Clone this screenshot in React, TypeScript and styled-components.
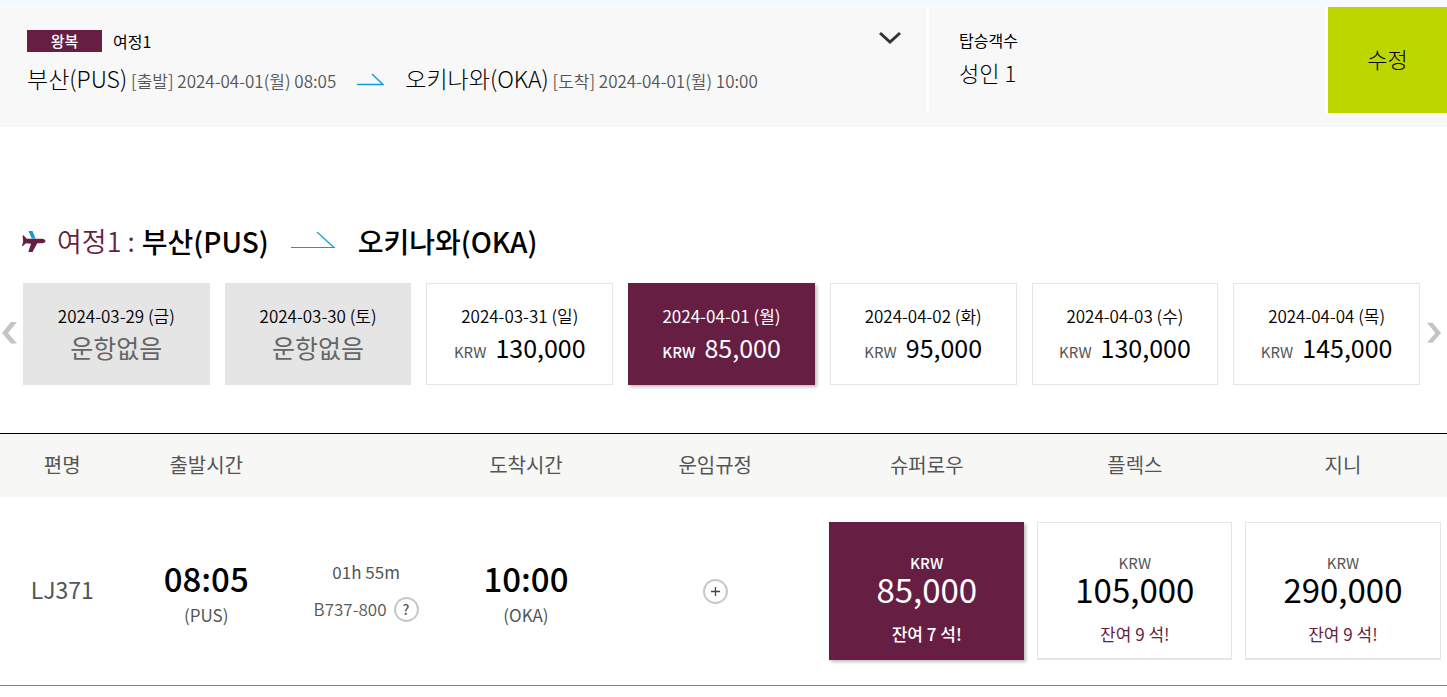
import React from "react";
import styled, { createGlobalStyle, css } from "styled-components";

const plum = "#661e43";
const sky = "#0d9ddb";

const GlobalStyle = createGlobalStyle`
  *, *::before, *::after { box-sizing: border-box; }
  body {
    margin: 0;
    background: #fff;
    color: #000;
    font-family: "Noto Sans CJK KR", "Noto Sans", sans-serif;
    font-size: 17px;
    line-height: 24px;
  }
  button { font: inherit; color: inherit; cursor: pointer; border: 0; padding: 0; background: none; }
  h2, p { margin: 0; }
`;

const Summary = styled.header`
  display: grid;
  grid-template-columns: 64% minmax(0, 1fr) 119px;
  padding-bottom: 14px;
  border-top: 7px solid #f5fafe;
  background: #f8f8f8;
`;

const Trip = styled.section`
  display: flex;
  align-items: flex-start;
  justify-content: space-between;
  min-height: 106px;
  padding: 22px 25px 0 27px;
`;

const TripHead = styled.div`
  display: flex;
  align-items: center;
  gap: 11px;
  height: 24px;
  font-size: 16px;
`;

const Badge = styled.span`
  width: 75px;
  background: ${plum};
  color: #fff;
  font-size: 15px;
  font-weight: 500;
  line-height: 22px;
  text-align: center;
`;

const Legs = styled.div`
  display: flex;
  align-items: center;
  flex-wrap: wrap;
  gap: 21px;
  margin-top: 9px;
  line-height: 32px;
`;

const Airport = styled.span`
  font-size: 23px;
  font-weight: 300;
`;

const Moment = styled.span`
  color: #555;
  font-weight: 350;
`;

const ToggleButton = styled.button`
  display: flex;
  margin-top: 2px;
`;

const Passengers = styled.section`
  padding: 21px 30px 0;
  border: solid #fff;
  border-width: 0 3px;
  font-size: 16px;
`;

const Count = styled.p`
  margin-top: 4px;
  font-size: 22px;
  font-weight: 300;
  line-height: 32px;
`;

const EditButton = styled.button`
  padding-bottom: 4px;
  background: #bdd600;
  font-size: 22px;
  font-weight: 300;
`;

const RouteTitle = styled.h2`
  display: flex;
  align-items: center;
  margin: 94px 22px 0;
  font-size: 28px;
  font-weight: 500;
  line-height: 40px;
`;

const RouteLabel = styled.span`
  margin: 0 7px 0 11px;
  color: ${plum};
  font-size: 27px;
  font-weight: 350;
`;

const RouteArrow = styled.svg`
  margin: 0 22px;
`;

const DateStrip = styled.nav`
  display: grid;
  grid-template-columns: 23px minmax(0, 1fr) 27px;
  margin-top: 22px;
`;

const PageButton = styled.button<{ $end?: boolean }>`
  display: flex;
  align-items: center;
  justify-content: ${(p) => (p.$end ? "flex-end" : "flex-start")};
  padding: 0 ${(p) => (p.$end ? 6 : 2)}px 2px;
`;

const Dates = styled.div`
  display: grid;
  grid-template-columns: repeat(7, minmax(0, 1fr));
  gap: 15px;
`;

type CardState = "open" | "selected" | "none";

const cardLook = {
  open: css`
    border: 1px solid #e5e5e5;
    background: #fff;
  `,
  selected: css`
    border: 1px solid ${plum};
    background: ${plum};
    color: #fff;
    box-shadow: 2px 2px 3px rgba(0, 0, 0, 0.25);
  `,
  none: css`
    border: 1px solid #e5e5e5;
    background: #e5e5e5;
  `,
};

const DateCard = styled.button<{ $state: CardState }>`
  height: 102px;
  padding-top: 2px;
  ${(p) => cardLook[p.$state]}
`;

const Day = styled.span<{ $selected: boolean }>`
  display: block;
  font-weight: ${(p) => (p.$selected ? 400 : 350)};
`;

const Price = styled.span`
  display: flex;
  align-items: baseline;
  justify-content: center;
  gap: 9px;
  font-size: 25px;
  line-height: 38px;
`;

const NoFlight = styled.span`
  display: block;
  color: #666;
  font-size: 25px;
  line-height: 38px;
`;

const Currency = styled.span<{ $selected: boolean }>`
  color: ${(p) => (p.$selected ? "#fff" : "#555")};
  font-size: 15px;
  font-weight: ${(p) => (p.$selected ? 500 : 400)};
  line-height: 24px;
`;

const FlightTable = styled.table`
  width: 100%;
  margin-top: 48px;
  border-collapse: collapse;
  table-layout: fixed;
  border-top: 1px solid #000;
  border-bottom: 1px solid #888;
`;

const HeadCell = styled.th<{ $width: number }>`
  width: ${(p) => p.$width}%;
  height: 63px;
  padding: 0;
  background: #f7f7f5;
  color: #555;
  font-size: 20px;
  font-weight: 400;
`;

const Cell = styled.td`
  height: 189px;
  padding: 0;
  color: #555;
  text-align: center;
`;

const FlightNo = styled.span`
  font-size: 23px;
`;

const Time = styled.p`
  padding-top: 8px;
  color: #000;
  font-size: 33px;
  font-weight: 500;
  line-height: 40px;
`;

const Station = styled.p`
  line-height: 34px;
`;

const Aircraft = styled.div`
  display: flex;
  align-items: center;
  justify-content: center;
  gap: 7px;
  margin-top: 13px;
  font-weight: 350;
`;

const RoundButton = styled.button`
  display: inline-grid;
  place-items: center;
  width: 25px;
  height: 25px;
  border: 2px solid #c8c8c8;
  border-radius: 50%;
  background: #fff;
  color: #555;
  font-size: 14px;
  font-weight: 500;
  line-height: 20px;
`;

const FareCard = styled.button<{ $selected: boolean }>`
  display: block;
  width: calc(100% - 13px);
  height: 138px;
  margin: 0 auto;
  padding-top: 16px;
  ${(p) => cardLook[p.$selected ? "selected" : "open"]}
  border-bottom-width: 2px;
`;

const FarePrice = styled.span<{ $selected: boolean }>`
  display: block;
  color: ${(p) => (p.$selected ? "#fff" : "#000")};
  font-size: 33px;
  line-height: 28px;
`;

const Seats = styled.span<{ $selected: boolean }>`
  display: block;
  margin-top: 19px;
  color: ${(p) => (p.$selected ? "#fff" : plum)};
  font-weight: ${(p) => (p.$selected ? 500 : 400)};
`;

const dates: { day: string; price?: string; selected?: boolean }[] = [
  { day: "2024-03-29 (금)" },
  { day: "2024-03-30 (토)" },
  { day: "2024-03-31 (일)", price: "130,000" },
  { day: "2024-04-01 (월)", price: "85,000", selected: true },
  { day: "2024-04-02 (화)", price: "95,000" },
  { day: "2024-04-03 (수)", price: "130,000" },
  { day: "2024-04-04 (목)", price: "145,000" },
];

const columns: [string, number][] = [
  ["편명", 8.6],
  ["출발시간", 11.3],
  ["", 10.8],
  ["도착시간", 11.3],
  ["운임규정", 14.86],
  ["슈퍼로우", 14.38],
  ["플렉스", 14.38],
  ["지니", 14.38],
];

const fares = [
  { price: "85,000", seats: 7, selected: true },
  { price: "105,000", seats: 9, selected: false },
  { price: "290,000", seats: 9, selected: false },
];

const Chevron = ({ left }: { left?: boolean }) => (
  <svg width="16" height="22" viewBox="0 0 16 22" aria-hidden="true">
    <path
      d={left ? "M9 0h6L6 11l9 10.500H9L0 11z" : "M7 0H1l9 11-9 10.500h6L16 11z"}
      fill="#c4c4c4"
    />
  </svg>
);

const Plane = () => (
  <svg width="24" height="21" viewBox="0 0 24 21" aria-hidden="true">
    <path d="M6.500 0h4l3 7.500H9.800z" fill={sky} />
    <path
      d="M.5 4.500h1.200l3 3.200h14.800q4 .4 4 2.300t-3.500 2.300h-4.800L10.500 21H6.300l2.700-8.300-5-.4-3 2.700H0l1.200-4.600z"
      fill={plum}
    />
  </svg>
);

export default function App() {
  return (
    <>
      <GlobalStyle />
      <Summary>
        <Trip>
          <div>
            <TripHead>
              <Badge>왕복</Badge>
              <span>여정1</span>
            </TripHead>
            <Legs>
              <span>
                <Airport>부산(PUS)</Airport> <Moment>[출발] 2024-04-01(월) 08:05</Moment>
              </span>
              <svg width="27" height="13" viewBox="0 0 27 13" fill="none" aria-hidden="true">
                <path d="M0 11.500h26L15 1" stroke={sky} strokeWidth="1.400" />
              </svg>
              <span>
                <Airport>오키나와(OKA)</Airport> <Moment>[도착] 2024-04-01(월) 10:00</Moment>
              </span>
            </Legs>
          </div>
          <ToggleButton aria-label="여정 펼치기">
            <svg width="22" height="14" viewBox="0 0 22 14" fill="none" aria-hidden="true">
              <path d="M1 2l10 9L21 2" stroke="#333" strokeWidth="3" />
            </svg>
          </ToggleButton>
        </Trip>
        <Passengers>
          <p>탑승객수</p>
          <Count>성인 1</Count>
        </Passengers>
        <EditButton>수정</EditButton>
      </Summary>

      <main>
        <RouteTitle>
          <Plane />
          <RouteLabel>여정1 :</RouteLabel>
          부산(PUS)
          <RouteArrow width="45" height="18" viewBox="0 0 45 18" fill="none" aria-hidden="true">
            <path d="M0 15.500h43L26 0" stroke={sky} strokeWidth="1.200" />
          </RouteArrow>
          오키나와(OKA)
        </RouteTitle>

        <DateStrip aria-label="날짜 선택">
          <PageButton aria-label="이전">
            <Chevron left />
          </PageButton>
          <Dates>
            {dates.map(({ day, price, selected = false }) => (
              <DateCard key={day} $state={selected ? "selected" : price ? "open" : "none"}>
                <Day $selected={selected}>{day}</Day>
                {price ? (
                  <Price>
                    <Currency $selected={selected}>KRW</Currency>
                    {price}
                  </Price>
                ) : (
                  <NoFlight>운항없음</NoFlight>
                )}
              </DateCard>
            ))}
          </Dates>
          <PageButton $end aria-label="다음">
            <Chevron />
          </PageButton>
        </DateStrip>

        <FlightTable>
          <thead>
            <tr>
              {columns.map(([name, width], i) => (
                <HeadCell key={i} $width={width} scope="col">
                  {name}
                </HeadCell>
              ))}
            </tr>
          </thead>
          <tbody>
            <tr>
              <Cell>
                <FlightNo>LJ371</FlightNo>
              </Cell>
              <Cell>
                <Time>08:05</Time>
                <Station>(PUS)</Station>
              </Cell>
              <Cell>
                <p>01h 55m</p>
                <Aircraft>
                  B737-800 <RoundButton aria-label="기종 안내">?</RoundButton>
                </Aircraft>
              </Cell>
              <Cell>
                <Time>10:00</Time>
                <Station>(OKA)</Station>
              </Cell>
              <Cell>
                <RoundButton aria-label="운임규정 보기">
                  <svg width="11" height="11" viewBox="0 0 11 11" aria-hidden="true">
                    <path d="M5.500 1v9M1 5.500h9" stroke="#444" strokeWidth="1.300" />
                  </svg>
                </RoundButton>
              </Cell>
              {fares.map(({ price, seats, selected }) => (
                <Cell key={price}>
                  <FareCard $selected={selected}>
                    <Currency $selected={selected}>KRW</Currency>
                    <FarePrice $selected={selected}>{price}</FarePrice>
                    <Seats $selected={selected}>잔여 {seats} 석!</Seats>
                  </FareCard>
                </Cell>
              ))}
            </tr>
          </tbody>
        </FlightTable>
      </main>
    </>
  );
}
